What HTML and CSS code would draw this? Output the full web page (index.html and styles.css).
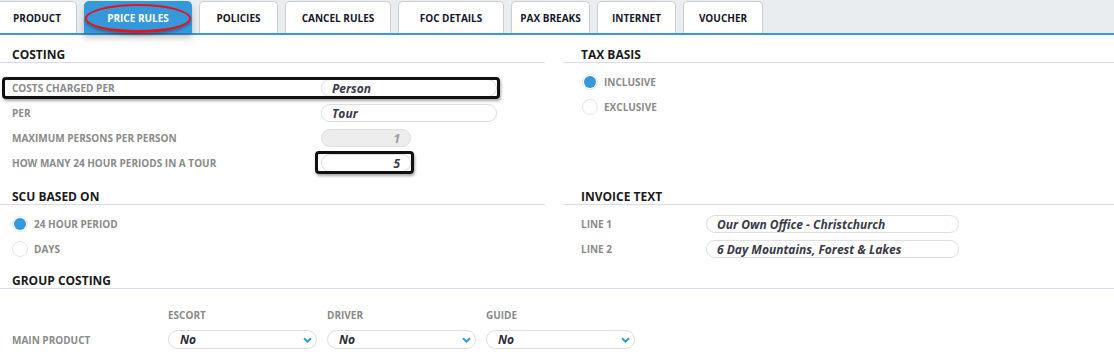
FILE: index.html
```html
<!DOCTYPE html>
<html lang="en">
<head>
  <meta charset="UTF-8" />
  <title>Price Rules</title>
  <link rel="stylesheet" href="styles.css">
</head>
<body>

<nav class="tabs">
  <a class="tab first">PRODUCT</a>
  <a class="tab wide active">PRICE RULES</a>
  <a class="tab">POLICIES</a>
  <a class="tab wide">CANCEL RULES</a>
  <a class="tab wide">FOC DETAILS</a>
  <a class="tab">PAX BREAKS</a>
  <a class="tab">INTERNET</a>
  <a class="tab">VOUCHER</a>
</nav>

<div class="cols top">
  <section class="section">
    <h2>COSTING</h2>
    <div class="fields costing">
      <div class="field marked">
        <label>COSTS CHARGED PER</label>
        <span class="input wide-in">Person</span>
      </div>
      <div class="field">
        <label>PER</label>
        <span class="input wide-in">Tour</span>
      </div>
      <div class="field">
        <label>MAXIMUM PERSONS PER PERSON</label>
        <span class="input short num disabled">1</span>
      </div>
      <div class="field">
        <label>HOW MANY 24 HOUR PERIODS IN A TOUR</label>
        <span class="input short num marked">5</span>
      </div>
    </div>
  </section>

  <section class="section right">
    <h2>TAX BASIS</h2>
    <div class="radios">
      <div class="radio checked"><span class="dot"></span>INCLUSIVE</div>
      <div class="radio"><span class="dot"></span>EXCLUSIVE</div>
    </div>
  </section>
</div>

<div class="cols mid">
  <section class="section">
    <h2>SCU BASED ON</h2>
    <div class="radios">
      <div class="radio checked"><span class="dot"></span>24 HOUR PERIOD</div>
      <div class="radio"><span class="dot"></span>DAYS</div>
    </div>
  </section>

  <section class="section right">
    <h2>INVOICE TEXT</h2>
    <div class="fields invoice">
      <div class="field">
        <label>LINE 1</label>
        <span class="input long">Our Own Office - Christchurch</span>
      </div>
      <div class="field">
        <label>LINE 2</label>
        <span class="input long">6 Day Mountains, Forest &amp; Lakes</span>
      </div>
    </div>
  </section>
</div>

<section class="section group">
  <h2>GROUP COSTING</h2>
  <div class="group-grid">
    <span></span>
    <span class="col-head">ESCORT</span>
    <span class="col-head">DRIVER</span>
    <span class="col-head">GUIDE</span>

    <label>MAIN PRODUCT</label>
    <div class="select">No
      <svg width="9" height="6" viewBox="0 0 9 6"><path d="M1 1.2 L4.5 4.6 L8 1.2" fill="none" stroke="#3498db" stroke-width="2"/></svg>
    </div>
    <div class="select">No
      <svg width="9" height="6" viewBox="0 0 9 6"><path d="M1 1.2 L4.5 4.6 L8 1.2" fill="none" stroke="#3498db" stroke-width="2"/></svg>
    </div>
    <div class="select">No
      <svg width="9" height="6" viewBox="0 0 9 6"><path d="M1 1.2 L4.5 4.6 L8 1.2" fill="none" stroke="#3498db" stroke-width="2"/></svg>
    </div>
  </div>
</section>

</body>
</html>
```

FILE: styles.css
```css
/* Base */
body {
  margin: 0;
  font-family: 'Open Sans', 'Liberation Sans', sans-serif;
  background: #fff;
  color: #222;
  overflow: hidden;
}

/* Tab strip */
.tabs {
  display: flex;
  gap: 7px;
  height: 35px;
  padding-top: 1px;
  box-sizing: border-box;
  background: #e9edef;
  border-bottom: 2px solid #3a9ad9;
}

.tab {
  position: relative;
  width: 79px;
  height: 32px;
  box-sizing: border-box;
  display: flex;
  align-items: center;
  justify-content: center;
  background: #fff;
  border: 1px solid #c9ced2;
  border-bottom: none;
  border-radius: 5px 5px 0 0;
  font-size: 10px;
  font-weight: 700;
  color: #16162a;
  cursor: pointer;
}
.tab.first {
  margin-left: -3px;
  width: 80px;
}
.tab.wide { width: 106px; }
.tab:last-child { width: 80px; }

.tab.active {
  width: 108px;
  background: #3498db;
  border-color: #3498db;
  color: #fff;
  z-index: 2;
  box-shadow: 0 5px 6px rgba(0,0,0,0.22);
}

/* red marker ellipse drawn over the active tab */
.tab.active::after {
  content: "";
  position: absolute;
  left: 0;
  right: 0;
  top: 2px;
  bottom: 0;
  border: 2px solid #e3141c;
  border-bottom-width: 3px;
  border-radius: 50%;
  box-shadow: 0 2px 3px rgba(0,0,0,0.3);
}

/* Two column rows */
.cols {
  display: grid;
  grid-template-columns: 545px 551px;
  column-gap: 18px;
}
.cols.top { margin-top: 13px; }
.cols.mid { margin-top: 15px; }

.section h2 {
  margin: 0;
  height: 14px;
  line-height: 14px;
  padding-left: 12px;
  font-size: 12px;
  font-weight: 700;
  color: #1a1a1a;
  border-bottom: 1px solid #dcd8ee;
}
.section.right h2 { padding-left: 18px; }

/* Label + input rows */
.fields { padding-left: 12px; }
.fields.costing { padding-top: 12px; }
.fields.invoice { padding: 6px 0 0 18px; }

.field {
  position: relative;
  display: flex;
  align-items: center;
  height: 25px;
}

label {
  font-size: 10px;
  font-weight: 700;
  color: #8a8a8a;
}
.costing label { width: 309px; }
.invoice label { width: 125px; }

.input {
  position: relative;
  height: 18px;
  line-height: 18px;
  box-sizing: border-box;
  padding: 0 10px;
  border: 1px solid #dedede;
  border-radius: 10px;
  font-size: 12px;
  font-weight: 700;
  font-style: italic;
  color: #3a3a48;
  background: #fff;
}
.input.wide-in { width: 176px; }
.input.short { width: 90px; }
.input.long { width: 253px; }
.input.num { text-align: right; }
.input.disabled {
  background: #ededed;
  color: #9a9a9a;
}

/* black highlight boxes */
.field.marked::after,
.input.marked::after {
  content: "";
  position: absolute;
  border: 3px solid #111;
  border-radius: 4px;
  box-shadow: 1px 2px 3px rgba(0,0,0,0.35);
}
.field.marked::after {
  left: -10px;
  right: 45px;
  top: 2px;
  bottom: 1px;
}
.input.marked::after {
  left: -7px;
  right: -4px;
  top: -4px;
  bottom: -3px;
}

/* Radio groups */
.radios { padding: 6px 0 0 12px; }
.right .radios { padding-left: 19px; }

.radio {
  display: flex;
  align-items: center;
  height: 25px;
  font-size: 10px;
  font-weight: 700;
  color: #8a8a8a;
}
.radio .dot {
  width: 16px;
  height: 16px;
  box-sizing: border-box;
  border: 1px solid #e6e6e6;
  border-radius: 50%;
  margin-right: 6px;
  background: #fff;
  position: relative;
}
.radio.checked .dot::after {
  content: "";
  position: absolute;
  left: 1px;
  top: 1px;
  width: 12px;
  height: 12px;
  border-radius: 50%;
  background: #3498db;
}

/* Group costing */
.section.group { margin-top: 13px; }

.group-grid {
  display: grid;
  grid-template-columns: 156px 159px 159px 159px;
  grid-template-rows: 20px 19px;
  row-gap: 5px;
  align-items: center;
  padding: 16px 0 0 12px;
}
.col-head {
  font-size: 10px;
  font-weight: 700;
  color: #8a8a8a;
}

.select {
  width: 149px;
  height: 19px;
  box-sizing: border-box;
  display: flex;
  align-items: center;
  justify-content: space-between;
  padding: 0 4px 0 11px;
  border: 1px solid #dedede;
  border-radius: 10px;
  font-size: 12px;
  font-weight: 700;
  font-style: italic;
  color: #2c2c38;
}
```
